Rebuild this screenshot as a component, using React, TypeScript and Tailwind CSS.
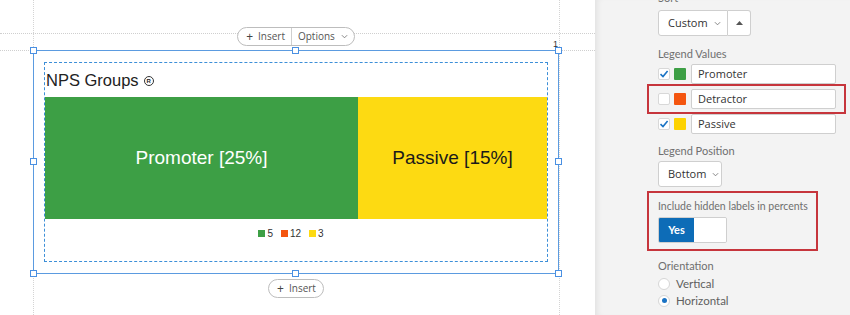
import React from "react";

const Handle = ({ cls }: { cls: string }) => (
  <div className={`absolute w-[7px] h-[7px] bg-white border border-[#4a90e2] ${cls}`} />
);

const Check = ({ checked }: { checked: boolean }) => (
  <div className="w-[12px] h-[12px] bg-white border border-[#d8d8d8] rounded-[2px] flex items-center justify-center">
    {checked && (
      <svg width="10" height="10" viewBox="0 0 10 10">
        <path d="M1.5 5.2 L4 7.6 L8.6 2" stroke="#1a73c4" strokeWidth="1.6" fill="none" />
      </svg>
    )}
  </div>
);

const Chevron = () => (
  <svg width="7" height="5" viewBox="0 0 8 5" className="ml-[6px]">
    <path d="M1 1 L4 4 L7 1" stroke="#777" strokeWidth="1" fill="none" />
  </svg>
);

const LegendRow = ({ checked, color, label }: { checked: boolean; color: string; label: string }) => (
  <div className="flex items-center h-[20px]">
    <Check checked={checked} />
    <div className="w-[12px] h-[12px] ml-[4px] rounded-[1px]" style={{ background: color }} />
    <div className="ml-[5px] w-[145px] h-[20px] bg-white border border-[#cfcfcf] rounded-[2px] flex items-center pl-[6px] text-[11px] text-[#333]">
      {label}
    </div>
  </div>
);

export default function App() {
  return (
    <div className="w-[850px] h-[315px] overflow-hidden flex bg-white" style={{ fontFamily: "'Liberation Sans', Arial, sans-serif" }}>
      {/* Canvas */}
      <div className="relative w-[595px] h-full bg-white">
        {/* guide lines */}
        <div className="absolute left-[33px] top-0 h-full border-l border-dotted border-[#d4d4d4]" />
        <div className="absolute left-[559px] top-0 h-full border-l border-dotted border-[#d4d4d4]" />
        <div className="absolute left-0 top-[33px] w-[240px] border-t border-dotted border-[#cfcfcf]" />
        <div className="absolute left-[352px] top-[33px] w-[243px] border-t border-dotted border-[#cfcfcf]" />
        <div className="absolute left-0 top-[50px] w-[33px] border-t border-dotted border-[#cfcfcf]" />
        <div className="absolute left-[560px] top-[50px] w-[35px] border-t border-dotted border-[#cfcfcf]" />

        <div className="relative ml-[33px] w-[526px] pt-[27px] flex flex-col items-center">
          {/* top pill */}
          <div
            className="h-[19px] flex items-center rounded-full border border-[#bdbdbd] bg-white text-[10px] text-[#555]"
            style={{ fontFamily: "'Open Sans', sans-serif" }}
          >
            <div className="flex items-center pl-[8px] pr-[6px] h-full">
              <span className="text-[12px] leading-none mr-[5px] text-[#444]">+</span>Insert
            </div>
            <div className="w-px h-full bg-[#cfcfcf]" />
            <div className="flex items-center pl-[6px] pr-[6px] h-full">
              Options
              <Chevron />
            </div>
          </div>

          {/* selection box */}
          <div className="relative mt-[4px] w-[526px] h-[224px] border border-[#5b9be0] px-[10px] pt-[11px] pb-[11px]">
            <Handle cls="-left-[4px] -top-[4px]" />
            <Handle cls="left-[258px] -top-[4px]" />
            <Handle cls="-right-[4px] -top-[4px]" />
            <Handle cls="-left-[4px] top-[107px]" />
            <Handle cls="-right-[4px] top-[107px]" />
            <Handle cls="-left-[4px] -bottom-[4px]" />
            <Handle cls="left-[258px] -bottom-[4px]" />
            <Handle cls="-right-[4px] -bottom-[4px]" />
            <div className="absolute right-0 -top-[13px] text-[9px] text-[#333]">1</div>

            <div className="w-full h-full border border-dashed border-[#3d8fd8] flex flex-col">
              <div className="h-[34px] flex items-center pl-[1px] pt-[1px] text-[16.5px] text-[#222]">
                NPS Groups
                <span className="ml-[5px] w-[10px] h-[10px] rounded-full border-[1.5px] border-[#333] text-[6px] font-bold flex items-center justify-center leading-none">R</span>
              </div>
              <div className="flex h-[122px]">
                <div className="w-[313px] bg-[#3d9f45] flex items-center justify-center text-white text-[19px]">
                  Promoter [25%]
                </div>
                <div className="flex-1 bg-[#fdda12] flex items-center justify-center text-[#1a1a1a] text-[19px]">
                  Passive [15%]
                </div>
              </div>
              <div className="flex justify-center items-center mt-[7px] pr-[10px] gap-[8px] text-[10px] text-[#333]">
                <div className="flex items-center gap-[2px]"><span className="w-[7px] h-[7px] bg-[#3d9f45]" />5</div>
                <div className="flex items-center gap-[2px]"><span className="w-[7px] h-[7px] bg-[#f4550f]" />12</div>
                <div className="flex items-center gap-[2px]"><span className="w-[7px] h-[7px] bg-[#fdda12]" />3</div>
              </div>
            </div>
          </div>

          {/* bottom pill */}
          <div
            className="mt-[5px] h-[19px] flex items-center rounded-full border border-[#bdbdbd] bg-white text-[10px] text-[#555] pl-[8px] pr-[7px]"
            style={{ fontFamily: "'Open Sans', sans-serif" }}
          >
            <span className="text-[12px] leading-none mr-[5px] text-[#444]">+</span>Insert
          </div>
        </div>
      </div>

      {/* Right panel */}
      <div
        className="flex-1 h-full bg-[#f3f3f3] border-l border-[#e6e6e6] shadow-[inset_5px_0_6px_-4px_rgba(0,0,0,0.08)] pl-[62px] flex flex-col text-[11px] text-[#6f6f6f]"
        style={{ fontFamily: "Lato, 'Open Sans', sans-serif" }}
      >
        <div className="-mt-[9px] h-[14px] leading-[14px]">Sort</div>
        <div className="mt-[5px] flex h-[26px]" style={{ fontFamily: "'Open Sans', sans-serif" }}>
          <div className="w-[70px] bg-white border border-[#cfcfcf] rounded-l-[3px] flex items-center pl-[9px] text-[#333] text-[11px]">
            Custom
            <Chevron />
          </div>
          <div className="w-[23px] bg-white border border-l-0 border-[#cfcfcf] rounded-r-[3px] flex items-center justify-center">
            <svg width="7" height="4" viewBox="0 0 7 4"><path d="M0 4 L3.5 0 L7 4 Z" fill="#555" /></svg>
          </div>
        </div>
        <div className="mt-[11px] h-[14px] leading-[14px]">Legend Values</div>
        <div className="mt-[3px] flex flex-col" style={{ fontFamily: "'Open Sans', sans-serif" }}>
          <LegendRow checked color="#3d9f45" label="Promoter" />
          <div className="-ml-[11px] w-[199px] border-2 border-[#c6353c] pl-[9px] py-[3px]">
            <LegendRow checked={false} color="#f4550f" label="Detractor" />
          </div>
          <LegendRow checked color="#fdd200" label="Passive" />
        </div>
        <div className="mt-[10px] h-[14px] leading-[14px]">Legend Position</div>
        <div
          className="mt-[3px] w-[64px] h-[26px] bg-white border border-[#cfcfcf] rounded-[3px] flex items-center pl-[9px] text-[#333] text-[11px]"
          style={{ fontFamily: "'Open Sans', sans-serif" }}
        >
          Bottom
          <Chevron />
        </div>
        <div className="mt-[4px] -ml-[11px] w-[171px] h-[60px] border-2 border-[#c6353c] pl-[9px] pt-[6px]">
          <div className="h-[14px] leading-[14px] text-[10.5px] whitespace-nowrap">Include hidden labels in percents</div>
          <div className="mt-[4px] flex w-[69px] h-[26px] border border-[#cfcfcf] rounded-[2px] overflow-hidden">
            <div className="w-[35px] bg-[#0d6cb7] text-white font-bold text-[11px] flex items-center justify-center">Yes</div>
            <div className="flex-1 bg-white" />
          </div>
        </div>
        <div className="mt-[8px] h-[14px] leading-[14px]">Orientation</div>
        <div className="mt-[3px] flex items-center h-[15px] gap-[6px] text-[#5f5f5f] text-[11.5px]">
          <div className="w-[12px] h-[12px] rounded-full bg-white border border-[#d6d6d6]" />
          Vertical
        </div>
        <div className="mt-[2px] flex items-center h-[15px] gap-[6px] text-[#5f5f5f] text-[11.5px]">
          <div className="w-[12px] h-[12px] rounded-full bg-white border border-[#d6d6d6] flex items-center justify-center">
            <div className="w-[5px] h-[5px] rounded-full bg-[#1a73c4]" />
          </div>
          Horizontal
        </div>
      </div>
    </div>
  );
}
